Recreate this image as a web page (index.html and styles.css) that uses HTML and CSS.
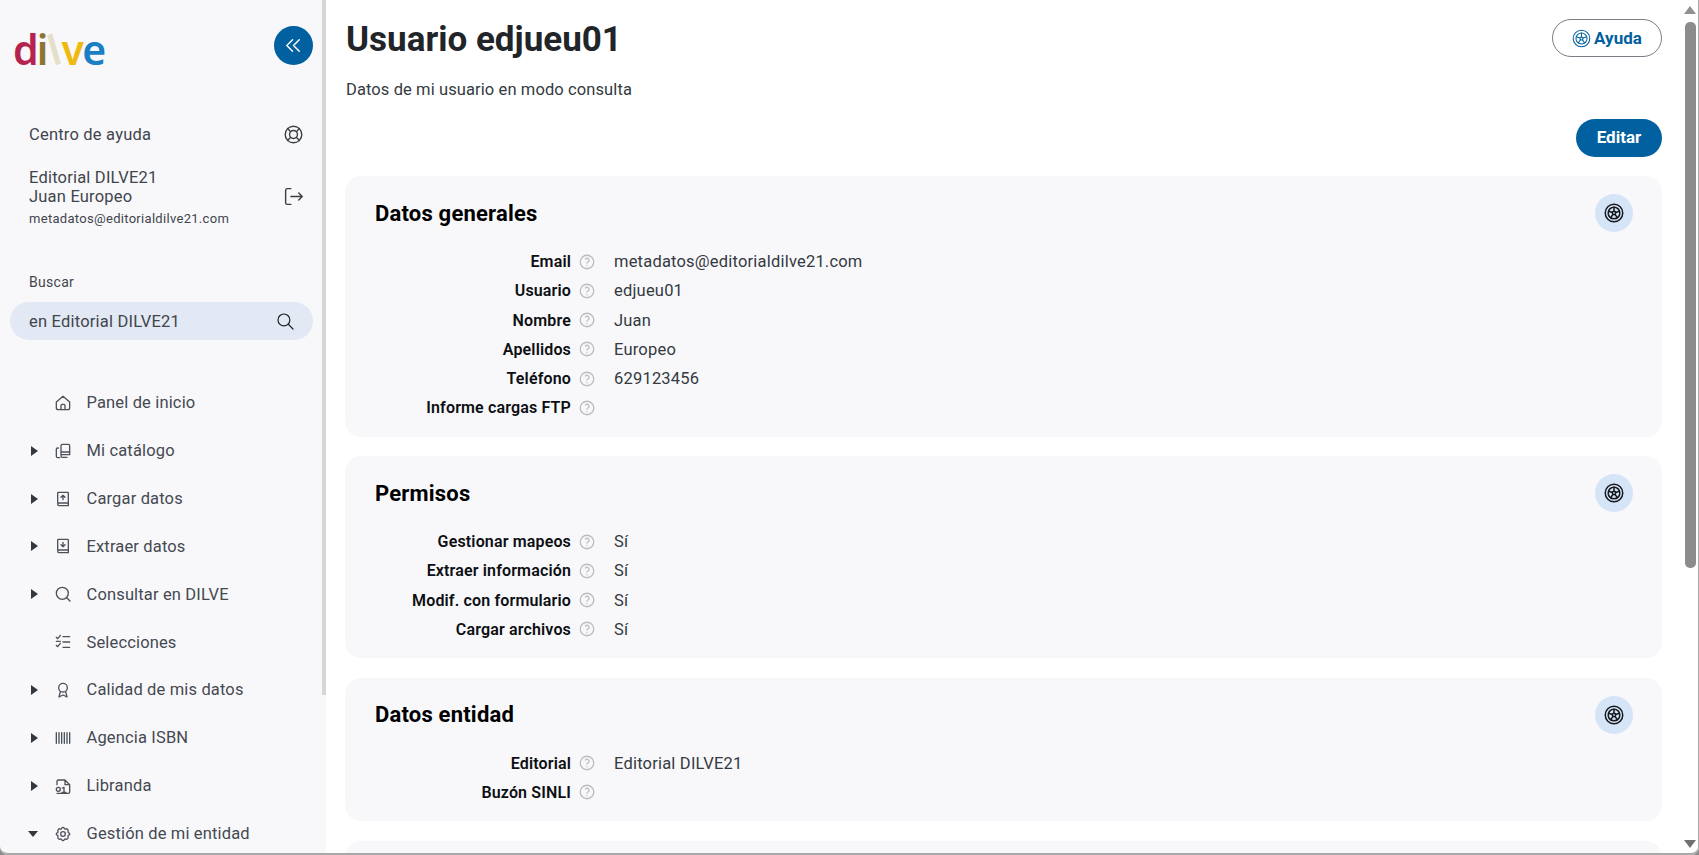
FILE: index.html
```html
<!DOCTYPE html>
<html lang="es">
<head>
    <meta charset="UTF-8">
    <meta name="viewport" content="width=device-width, initial-scale=1.0">
    <title>Usuario edjueu01</title>
    <link rel="stylesheet" href="styles.css">
</head>
<body>
    <svg class="sprite" width="0" height="0">
        <symbol id="i-rueda" viewBox="0 0 24 24">
            <circle cx="12" cy="12" r="10.500"/>
            <circle cx="12" cy="12" r="7"/>
            <circle cx="12" cy="12" r="2"/>
            <path d="M12 5v5M18.600 9.900l-4.700 1.500M16.100 17.700l-2.900 -4M7.900 17.700l2.900 -4M5.400 9.900l4.700 1.500"/>
        </symbol>
        <symbol id="i-ayuda" viewBox="0 0 24 24">
            <circle cx="12" cy="12" r="9"/>
            <path d="M12 17v.01M12 13.500a1.500 1.500 0 0 1 1 -1.500a2.600 2.600 0 1 0 -3 -4"/>
        </symbol>
    </svg>

    <div class="app">
        <aside class="lateral">
            <div class="lateral-top">
                <div class="logo"><span class="l-d">d</span><span class="l-i">i</span><span class="l-l">l</span><span class="l-v">v</span><span class="l-e">e</span></div>
                <button class="btn-plegar">
                    <svg viewBox="0 0 24 24"><path d="M11 6l-6 6l6 6M18 6l-6 6l6 6"/></svg>
                </button>
            </div>

            <div class="fila-ayuda">
                <span>Centro de ayuda</span>
                <svg class="ico" viewBox="0 0 24 24"><circle cx="12" cy="12" r="9.500"/><circle cx="12" cy="12" r="4.500"/><path d="M15.200 15.200l3.600 3.600M8.800 15.200l-3.600 3.600M8.800 8.800l-3.600 -3.600M15.200 8.800l3.600 -3.600"/></svg>
            </div>

            <div class="fila-usuario">
                <div>
                    <div>Editorial DILVE21</div>
                    <div>Juan Europeo</div>
                    <div class="correo">metadatos@editorialdilve21.com</div>
                </div>
                <svg class="ico ico-salir" viewBox="0 0 24 24"><path d="M9 3H5a2 2 0 0 0 -2 2v14a2 2 0 0 0 2 2h4M9 12h13M18 8l4 4l-4 4"/></svg>
            </div>

            <div class="buscar-label">Buscar</div>
            <div class="buscar">
                <span>en Editorial DILVE21</span>
                <svg viewBox="0 0 24 24"><circle cx="10" cy="10" r="7.500"/><path d="M21.500 21.500l-6 -6"/></svg>
            </div>

            <nav class="menu">
                <a class="item">
                    <span class="caret"></span>
                    <svg class="ico-menu" viewBox="0 0 24 24"><path d="M2 10.500L12 2L22 10.500V19a3 3 0 0 1 -3 3H5a3 3 0 0 1 -3 -3zM9 22v-6a2 2 0 0 1 2 -2h2a2 2 0 0 1 2 2v6"/></svg>
                    Panel de inicio
                </a>
                <a class="item">
                    <span class="caret derecha"></span>
                    <svg class="ico-menu" viewBox="0 0 24 24"><path d="M9 17.500V4a2 2 0 0 1 2 -2h9a2 2 0 0 1 2 2v13.500H11a2 2 0 0 0 0 4h7M9 13.500h13M5 7.500H4a2 2 0 0 0 -2 2V20a2 2 0 0 0 2 2h3"/></svg>
                    Mi catálogo
                </a>
                <a class="item">
                    <span class="caret derecha"></span>
                    <svg class="ico-menu" viewBox="0 0 24 24"><path d="M4 18V3a1 1 0 0 1 1 -1h14a1 1 0 0 1 1 1v19H6a2 2 0 0 1 -2 -2a2 2 0 0 1 2 -2h14M12 13V6.500M9 9.500l3 -3l3 3"/></svg>
                    Cargar datos
                </a>
                <a class="item">
                    <span class="caret derecha"></span>
                    <svg class="ico-menu" viewBox="0 0 24 24"><path d="M4 18V3a1 1 0 0 1 1 -1h14a1 1 0 0 1 1 1v19H6a2 2 0 0 1 -2 -2a2 2 0 0 1 2 -2h14M12 6.500V13M9 10l3 3l3 -3"/></svg>
                    Extraer datos
                </a>
                <a class="item">
                    <span class="caret derecha"></span>
                    <svg class="ico-menu" viewBox="0 0 24 24"><circle cx="11" cy="11" r="9"/><path d="M22.500 22.500l-5 -5"/></svg>
                    Consultar en DILVE
                </a>
                <a class="item">
                    <span class="caret"></span>
                    <svg class="ico-menu" viewBox="0 0 24 24"><path d="M2 5l2 2l4 -5M2 17l2 2l4 -5M12 4h10M12 12h10M12 20h10M2 11h6"/></svg>
                    Selecciones
                </a>
                <a class="item">
                    <span class="caret derecha"></span>
                    <svg class="ico-menu" viewBox="0 0 24 24"><circle cx="12" cy="8.500" r="6.500"/><path d="M8 14.500L6 22.500l6 -3l6 3l-2 -8"/></svg>
                    Calidad de mis datos
                </a>
                <a class="item">
                    <span class="caret derecha"></span>
                    <svg class="ico-menu" viewBox="0 0 24 24"><path d="M2 4v16M6 4v16M10 4v16M14 4v16M18 4v16M22 4v16"/></svg>
                    Agencia ISBN
                </a>
                <a class="item">
                    <span class="caret derecha"></span>
                    <svg class="ico-menu" viewBox="0 0 24 24"><path d="M3 10V5a2 2 0 0 1 2 -2h10l7 7v11a2 2 0 0 1 -2 2H3M15 3v7h7"/><circle cx="5" cy="17" r="3"/><path d="M11 15l2.500 -1v7M10.500 21.500h6"/></svg>
                    Libranda
                </a>
                <a class="item">
                    <span class="caret abajo"></span>
                    <svg class="ico-menu" viewBox="0 0 24 24"><path d="M10.300 3.300c.4 -1.800 3 -1.800 3.400 0a1.700 1.700 0 0 0 2.600 1.100c1.500 -.9 4.300 1.800 3.400 3.400a1.700 1.700 0 0 0 1 2.500c1.800 .4 1.800 3 0 3.400a1.700 1.700 0 0 0 -1 2.600c.9 1.500 -1.900 4.300 -3.400 3.400a1.700 1.700 0 0 0 -2.600 1c-.4 1.800 -3 1.800 -3.400 0a1.700 1.700 0 0 0 -2.600 -1c-1.500 .9 -4.300 -1.900 -3.400 -3.400a1.700 1.700 0 0 0 -1 -2.600c-1.800 -.4 -1.800 -3 0 -3.400a1.700 1.700 0 0 0 1 -2.500c-.9 -1.600 1.900 -4.300 3.400 -3.400a1.700 1.700 0 0 0 2.600 -1.100z"/><circle cx="12" cy="12" r="3.500"/></svg>
                    Gestión de mi entidad
                </a>
            </nav>
        </aside>
        <div class="barra-lateral"><div class="barra-lateral-thumb"></div></div>

        <main class="contenido">
            <header class="cabecera">
                <h1>Usuario edjueu01</h1>
                <button class="btn-ayuda"><svg><use href="#i-rueda"/></svg>Ayuda</button>
            </header>
            <p class="subtitulo">Datos de mi usuario en modo consulta</p>
            <div class="acciones"><button class="btn-editar">Editar</button></div>

            <section class="tarjeta">
                <div class="tarjeta-top">
                    <h2>Datos generales</h2>
                    <span class="circulo"><svg><use href="#i-rueda"/></svg></span>
                </div>
                <dl class="datos">
                    <dt>Email</dt><svg class="q"><use href="#i-ayuda"/></svg><dd>metadatos@editorialdilve21.com</dd>
                    <dt>Usuario</dt><svg class="q"><use href="#i-ayuda"/></svg><dd>edjueu01</dd>
                    <dt>Nombre</dt><svg class="q"><use href="#i-ayuda"/></svg><dd>Juan</dd>
                    <dt>Apellidos</dt><svg class="q"><use href="#i-ayuda"/></svg><dd>Europeo</dd>
                    <dt>Teléfono</dt><svg class="q"><use href="#i-ayuda"/></svg><dd>629123456</dd>
                    <dt>Informe cargas FTP</dt><svg class="q"><use href="#i-ayuda"/></svg><dd></dd>
                </dl>
            </section>

            <section class="tarjeta">
                <div class="tarjeta-top">
                    <h2>Permisos</h2>
                    <span class="circulo"><svg><use href="#i-rueda"/></svg></span>
                </div>
                <dl class="datos">
                    <dt>Gestionar mapeos</dt><svg class="q"><use href="#i-ayuda"/></svg><dd>Sí</dd>
                    <dt>Extraer información</dt><svg class="q"><use href="#i-ayuda"/></svg><dd>Sí</dd>
                    <dt>Modif. con formulario</dt><svg class="q"><use href="#i-ayuda"/></svg><dd>Sí</dd>
                    <dt>Cargar archivos</dt><svg class="q"><use href="#i-ayuda"/></svg><dd>Sí</dd>
                </dl>
            </section>

            <section class="tarjeta">
                <div class="tarjeta-top">
                    <h2>Datos entidad</h2>
                    <span class="circulo"><svg><use href="#i-rueda"/></svg></span>
                </div>
                <dl class="datos">
                    <dt>Editorial</dt><svg class="q"><use href="#i-ayuda"/></svg><dd>Editorial DILVE21</dd>
                    <dt>Buzón SINLI</dt><svg class="q"><use href="#i-ayuda"/></svg><dd></dd>
                </dl>
            </section>

            <section class="tarjeta tarjeta-resto"></section>
        </main>

        <div class="barra">
            <span class="flecha-arriba"></span>
            <div class="barra-thumb"></div>
            <span class="flecha-abajo"></span>
        </div>
    </div>
    <div class="marco"></div>
</body>
</html>
```

FILE: styles.css
```css
* {
    box-sizing: border-box;
}
html, body {
    margin: 0;
    padding: 0;
    height: 100%;
    overflow: hidden;
}
body {
    font-family: Roboto, "Liberation Sans", sans-serif;
    font-size: 16px;
    color: #212529;
    background: #fff;
}
button {
    font-family: inherit;
    cursor: pointer;
}
svg {
    fill: none;
    stroke: currentColor;
    stroke-width: 1.5;
    stroke-linecap: round;
    stroke-linejoin: round;
}
.sprite {
    position: absolute;
}
.app {
    display: flex;
    height: 100vh;
}
.marco {
    position: fixed;
    inset: 0;
    border-right: 1px solid #a8a8a8;
    border-bottom: 2px solid #a8a8a8;
    border-bottom-left-radius: 8px;
    border-bottom-right-radius: 8px;
    box-shadow: 0 0 0 8px #8a8a8a;
    pointer-events: none;
}

/* lateral */
.lateral {
    width: 322px;
    flex: none;
    height: 100%;
    overflow: hidden;
    background: #f8f8fb;
    color: #41454c;
    padding: 26px 9px 0 10px;
}
.barra-lateral {
    width: 4px;
    flex: none;
    background: #f8f8fb;
}
.barra-lateral-thumb {
    height: 695px;
    background: #d6d6d6;
}
.lateral-top {
    display: flex;
    justify-content: space-between;
    align-items: flex-start;
    height: 39px;
    padding-left: 3px;
}
.logo {
    font-family: "Noto Sans", sans-serif;
    font-size: 41px;
    font-weight: 600;
    line-height: 44px;
    display: flex;
    margin-top: 1px;
}
.l-d { color: #b5234f; }
.l-i { color: #8f7430; margin-left: -2px; }
.l-l { color: #e4dfc8; transform: rotate(-16deg); }
.l-v { color: #efb90f; margin-left: 1.500px; }
.l-e { color: #1a7fc4; margin-left: -1.500px; }
.btn-plegar {
    width: 39px;
    height: 39px;
    border: none;
    border-radius: 50%;
    background: #0060a0;
    color: #fff;
    padding: 8px;
    display: flex;
}
.fila-ayuda {
    display: flex;
    justify-content: space-between;
    align-items: center;
    margin-top: 57px;
    padding: 0 9px 0 19px;
    height: 24px;
    font-size: 16.500px;
    letter-spacing: .2px;
}
.ico {
    width: 21px;
    height: 21px;
    flex: none;
    color: #3a3d42;
    stroke-width: 1.600;
}
.ico-salir {
    margin-bottom: 4px;
}
.fila-usuario {
    display: flex;
    justify-content: space-between;
    align-items: center;
    margin-top: 20px;
    padding: 2px 9px 0 19px;
    font-size: 16.500px;
    line-height: 19px;
    letter-spacing: .2px;
}
.correo {
    font-size: 13px;
    margin-top: 3px;
    letter-spacing: .3px;
}
.buscar-label {
    font-size: 14px;
    margin-top: 44px;
    padding-left: 19px;
    line-height: 20px;
    letter-spacing: .3px;
}
.buscar {
    display: flex;
    justify-content: space-between;
    align-items: center;
    height: 38px;
    margin-top: 10px;
    padding: 1px 18px 0 19px;
    border-radius: 19px;
    background: #e2e9f4;
    font-size: 16.500px;
    letter-spacing: .2px;
}
.buscar svg {
    width: 19px;
    height: 19px;
    color: #1c2024;
}
.menu {
    margin-top: 39px;
}
.item {
    display: flex;
    align-items: center;
    height: 47.850px;
    padding-left: 19px;
    font-size: 16.500px;
    letter-spacing: .15px;
    color: #454950;
}
.caret {
    width: 25px;
    flex: none;
    display: flex;
}
.caret.derecha::before {
    content: "";
    border-left: 7px solid #33383e;
    border-top: 5.500px solid transparent;
    border-bottom: 5.500px solid transparent;
    margin-left: 2px;
}
.caret.abajo::before {
    content: "";
    border-top: 6px solid #33383e;
    border-left: 5.500px solid transparent;
    border-right: 5.500px solid transparent;
    margin-left: -1px;
}
.ico-menu {
    width: 16px;
    height: 16px;
    flex: none;
    margin-left: 1px;
    margin-right: 15.500px;
    stroke-width: 2;
    color: #4d5159;
}

/* contenido */
.contenido {
    flex: 1;
    height: 100%;
    overflow: hidden;
    padding: 19px 20px 0 19px;
}
.barra {
    width: 17px;
    flex: none;
    position: relative;
    background: #fff;
}
.barra-thumb {
    position: absolute;
    top: 22px;
    left: 3px;
    width: 11px;
    height: 546px;
    border-radius: 5px;
    background: #8c8c8c;
}
.flecha-arriba,
.flecha-abajo {
    position: absolute;
    left: 2px;
    border-left: 6px solid transparent;
    border-right: 6px solid transparent;
}
.flecha-arriba {
    top: 6px;
    border-bottom: 8px solid #909090;
}
.flecha-abajo {
    top: 840px;
    border-top: 8px solid #707070;
}
.cabecera {
    display: flex;
    justify-content: space-between;
    align-items: flex-start;
}
h1 {
    margin: 1px 0 0 1px;
    font-size: 35px;
    font-weight: 700;
    line-height: 40px;
    color: #212529;
}
.btn-ayuda {
    display: flex;
    align-items: center;
    justify-content: center;
    gap: 3px;
    width: 110px;
    height: 38px;
    border: 1px solid #7a7d85;
    border-radius: 19px;
    background: #fff;
    color: #0060a0;
    font-size: 17px;
    font-weight: 700;
    padding: 0;
}
.btn-ayuda svg {
    width: 19px;
    height: 19px;
    stroke-width: 1.300;
}
.subtitulo {
    margin: 20px 0 0 1px;
    line-height: 20px;
    font-size: 16.500px;
    color: #343a40;
    letter-spacing: .1px;
}
.acciones {
    display: flex;
    justify-content: flex-end;
    margin-top: 19px;
}
.btn-editar {
    width: 86px;
    height: 38px;
    border: none;
    border-radius: 19px;
    background: #0060a0;
    color: #fff;
    font-size: 17px;
    font-weight: 700;
    padding: 0 0 2px;
}
.tarjeta {
    background: #f8f8fb;
    border-radius: 16px;
    padding: 18px 29px 14px 30px;
    margin-top: 19.500px;
}
.acciones + .tarjeta {
    margin-top: 19px;
}
.tarjeta-top {
    display: flex;
    justify-content: space-between;
    align-items: center;
    height: 38px;
}
h2 {
    margin: 0;
    font-size: 22px;
    font-weight: 700;
    color: #000;
    letter-spacing: .2px;
}
.circulo {
    width: 38px;
    height: 38px;
    border-radius: 50%;
    background: #d6e4f7;
    color: #15191e;
    display: flex;
    align-items: center;
    justify-content: center;
}
.circulo svg {
    width: 20px;
    height: 20px;
    stroke-width: 1.800;
}
.datos {
    display: grid;
    grid-template-columns: 196px auto 1fr;
    grid-auto-rows: 29.250px;
    align-items: center;
    margin: 15px 0 0;
}
dt {
    font-weight: 600;
    text-align: right;
    color: #0d0f12;
    font-size: 16px;
    letter-spacing: .15px;
}
dd {
    margin: 0 0 0 18px;
    color: #343a40;
    font-size: 16.500px;
    letter-spacing: .2px;
}
.q {
    width: 18px;
    height: 18px;
    margin-left: 7px;
    color: #bcbcbc;
    stroke-width: 1.700;
}
.tarjeta-resto {
    height: 100px;
}
```
